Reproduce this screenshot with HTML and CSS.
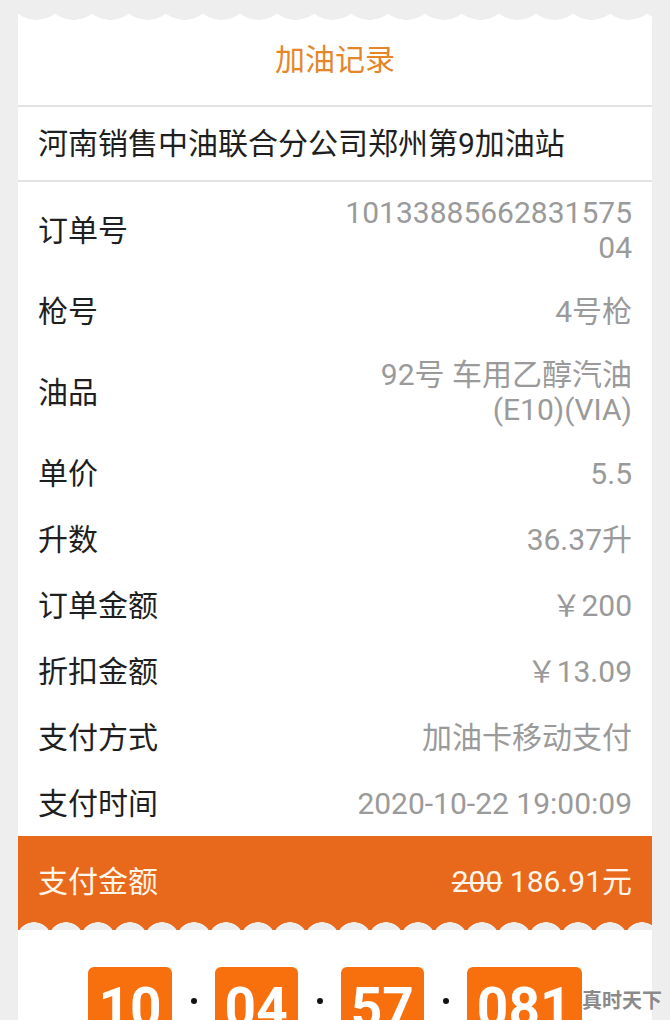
FILE: index.html
```html
<!DOCTYPE html>
<html>
	<head>
		<meta charset="utf-8" />
		<title>加油记录</title>
		<link rel="stylesheet" href="styles.css">
	</head>
	<body>
		<div class="card">
			<h2 class="head">加油记录</h2>
			<div class="station">河南销售中油联合分公司郑州第9加油站</div>
			<ul class="info">
				<li><span class="label">订单号</span><span class="value">1013388566283157504</span></li>
				<li><span class="label">枪号</span><span class="value">4号枪</span></li>
				<li><span class="label">油品</span><span class="value">92号 车用乙醇汽油(E10)(VIA)</span></li>
				<li><span class="label">单价</span><span class="value">5.5</span></li>
				<li><span class="label">升数</span><span class="value">36.37升</span></li>
				<li><span class="label">订单金额</span><span class="value">￥200</span></li>
				<li><span class="label">折扣金额</span><span class="value">￥13.09</span></li>
				<li><span class="label">支付方式</span><span class="value">加油卡移动支付</span></li>
				<li><span class="label">支付时间</span><span class="value">2020-10-22 19:00:09</span></li>
			</ul>
			<div class="pay">
				<span>支付金额</span>
				<span><s>200</s> 186.91元</span>
			</div>
			<div class="timer">
				<span class="box">10</span>
				<i class="dot"></i>
				<span class="box">04</span>
				<i class="dot"></i>
				<span class="box">57</span>
				<i class="dot"></i>
				<span class="box">081</span>
			</div>
		</div>
		<div class="mark">真时天下</div>
	</body>
</html>
```

FILE: styles.css
```css
*{
	padding: 0;
	margin: 0;
}
html,body{
	width: 100%;
	height: 100%;
}
body{
	overflow: hidden;
	background: #eeeeee;
	padding-top: 14px;
	box-sizing: border-box;
	font-family: Roboto, "Noto Sans CJK SC", sans-serif;
	position: relative;
}
li{
	list-style: none;
}
.card{
	margin: 0 18px;
	background: #fff;
}
/* 顶部锯齿 */
.head{
	font-size: 30px;
	font-weight: normal;
	line-height: 35px;
	padding: 28px 0;
	text-align: center;
	color: #e5862b;
	background: radial-gradient(circle 31px at 50% -25px, #eeeeee 30.5px, transparent 31px) 0 0 / 37px 7px repeat-x, #fff;
	border-bottom: 2px solid #e3e3e3;
}
.station{
	font-size: 30px;
	line-height: 35px;
	padding: 19px 20px;
	color: #1f1f1f;
	border-bottom: 2px solid #e3e3e3;
}
.info li{
	display: flex;
	justify-content: space-between;
	align-items: center;
	min-height: 66px;
	padding: 13px 20px;
	box-sizing: border-box;
	font-size: 30px;
	line-height: 35px;
}
.info .label{
	flex: 1;
	color: #1f1f1f;
}
.info .value{
	max-width: 292px;
	text-align: right;
	color: #9a9a9a;
	overflow-wrap: anywhere;
}
/* 支付金额 */
.pay{
	display: flex;
	justify-content: space-between;
	padding: 28px 20px 31px;
	font-size: 30px;
	line-height: 35px;
	color: #fff6ea;
	background: radial-gradient(circle 18px at 50% 18px, #eeeeee 17.5px, transparent 18px) 0 100% / 32px 8px repeat-x, #e8681c;
}
.pay s{
	text-decoration-thickness: 2px;
}
/* 倒计时 */
.timer{
	display: flex;
	justify-content: center;
	align-items: flex-start;
	padding-top: 37px;
	height: 140px;
}
.box{
	padding: 0 10px;
	height: 120px;
	font-size: 55px;
	font-weight: bold;
	line-height: 82px;
	color: #fff;
	background: #f7700d;
	border-radius: 6px 6px 0 0;
}
.dot{
	width: 6px;
	height: 6px;
	margin: 31px 18px 0 19px;
	border-radius: 50%;
	background: #111;
}
.mark{
	position: absolute;
	left: 582px;
	top: 985px;
	font-family: "Noto Sans CJK SC", sans-serif;
	font-size: 20px;
	font-weight: bold;
	line-height: 30px;
	color: #8a8a8a;
	text-shadow: 0 0 2px #fff, 0 0 2px #fff;
}
```
